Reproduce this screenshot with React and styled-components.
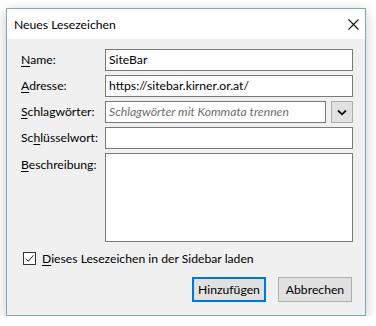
import React from "react";
import styled, { createGlobalStyle } from "styled-components";

const Global = createGlobalStyle`
  html, body { margin: 0; padding: 0; background: #ffffff; }
  body { font-family: Lato, "Noto Sans", sans-serif; font-size: 12px; color: #000; }
  * { box-sizing: border-box; }
`;

const Dialog = styled.div`
  margin: 8px 0 0 6px;
  width: 360px;
  height: 308px;
  border: 1px solid #7ea8b7;
  background: #f0f0f0;
  box-shadow: 0 3px 12px rgba(0, 0, 0, 0.22);
  display: flex;
  flex-direction: column;
`;

const TitleBar = styled.div`
  height: 30px;
  background: #ffffff;
  display: flex;
  align-items: center;
  justify-content: space-between;
  padding: 0 2px 0 7px;
`;

const Title = styled.span`
  font-size: 12.2px;
  color: #000;
`;

const CloseBtn = styled.div`
  width: 20px;
  height: 20px;
  display: flex;
  align-items: center;
  justify-content: center;
`;

const Body = styled.div`
  flex: 1;
  padding: 10px 11px 13px 14px;
  display: flex;
  flex-direction: column;
`;

const Form = styled.div`
  display: grid;
  grid-template-columns: 84px 248px;
  row-gap: 4px;
`;

const Label = styled.label`
  font-size: 12.2px;
  line-height: 22px;
  height: 22px;
  white-space: nowrap;
  align-self: ${(p) => (p.$top ? "start" : "center")};
  padding-top: ${(p) => (p.$top ? "1px" : "0")};
  u { text-decoration: underline; text-underline-offset: 2px; }
`;

const Input = styled.div`
  height: ${(p) => p.$h || 22}px;
  border: 1px solid #7a7a7a;
  background: #ffffff;
  padding: 0 3px;
  line-height: 20px;
  font-size: 12.2px;
  color: ${(p) => (p.$placeholder ? "#6d6d6d" : "#000")};
  font-style: ${(p) => (p.$placeholder ? "italic" : "normal")};
  white-space: nowrap;
  overflow: hidden;
  flex: 1;
`;

const TagRow = styled.div`
  display: flex;
  gap: 5px;
`;

const DropBtn = styled.div`
  width: 22px;
  height: 22px;
  border: 1px solid #adadad;
  background: #e1e1e1;
  display: flex;
  align-items: center;
  justify-content: center;
`;

const CheckRow = styled.label`
  display: flex;
  align-items: center;
  gap: 6px;
  margin: 9px 0 0 2px;
  font-size: 12.2px;
  u { text-decoration: underline; text-underline-offset: 2px; }
`;

const CheckBox = styled.span`
  width: 13px;
  height: 13px;
  border: 1px solid #333;
  background: #fff;
  display: flex;
  align-items: center;
  justify-content: center;
`;

const Buttons = styled.div`
  margin-top: auto;
  display: flex;
  justify-content: flex-end;
  gap: 12px;
  padding-right: 2px;
`;

const Button = styled.div`
  width: 74px;
  height: 25px;
  display: flex;
  align-items: center;
  justify-content: center;
  font-size: 12.2px;
  background: #e1e1e1;
  border: ${(p) => (p.$default ? "2px solid #0078d7" : "1px solid #adadad")};
`;

export default function App() {
  return (
    <>
      <Global />
      <Dialog>
        <TitleBar>
          <Title>Neues Lesezeichen</Title>
          <CloseBtn>
            <svg width="11" height="11" viewBox="0 0 11 11">
              <path d="M0.5 0.5 L10.5 10.5 M10.5 0.5 L0.5 10.5" stroke="#111" strokeWidth="1.1" fill="none" />
            </svg>
          </CloseBtn>
        </TitleBar>
        <Body>
          <Form>
            <Label><u>N</u>ame:</Label>
            <Input>SiteBar</Input>
            <Label><u>A</u>dresse:</Label>
            <Input>https://sitebar.kirner.or.at/</Input>
            <Label><u>S</u>chlagwörter:</Label>
            <TagRow>
              <Input $placeholder>Schlagwörter mit Kommata trennen</Input>
              <DropBtn>
                <svg width="10" height="7" viewBox="0 0 10 7">
                  <path d="M1 1.5 L5 5.3 L9 1.5" stroke="#111" strokeWidth="1.8" fill="none" />
                </svg>
              </DropBtn>
            </TagRow>
            <Label>Sc<u>h</u>lüsselwort:</Label>
            <Input />
            <Label $top><u>B</u>eschreibung:</Label>
            <Input $h={89} />
          </Form>
          <CheckRow>
            <CheckBox>
              <svg width="11" height="11" viewBox="0 0 11 11">
                <path d="M1.5 5.5 L4.3 8.3 L9.5 2.2" stroke="#222" strokeWidth="1" fill="none" />
              </svg>
            </CheckBox>
            <span><u>D</u>ieses Lesezeichen in der Sidebar laden</span>
          </CheckRow>
          <Buttons>
            <Button $default>Hinzufügen</Button>
            <Button>Abbrechen</Button>
          </Buttons>
        </Body>
      </Dialog>
    </>
  );
}
